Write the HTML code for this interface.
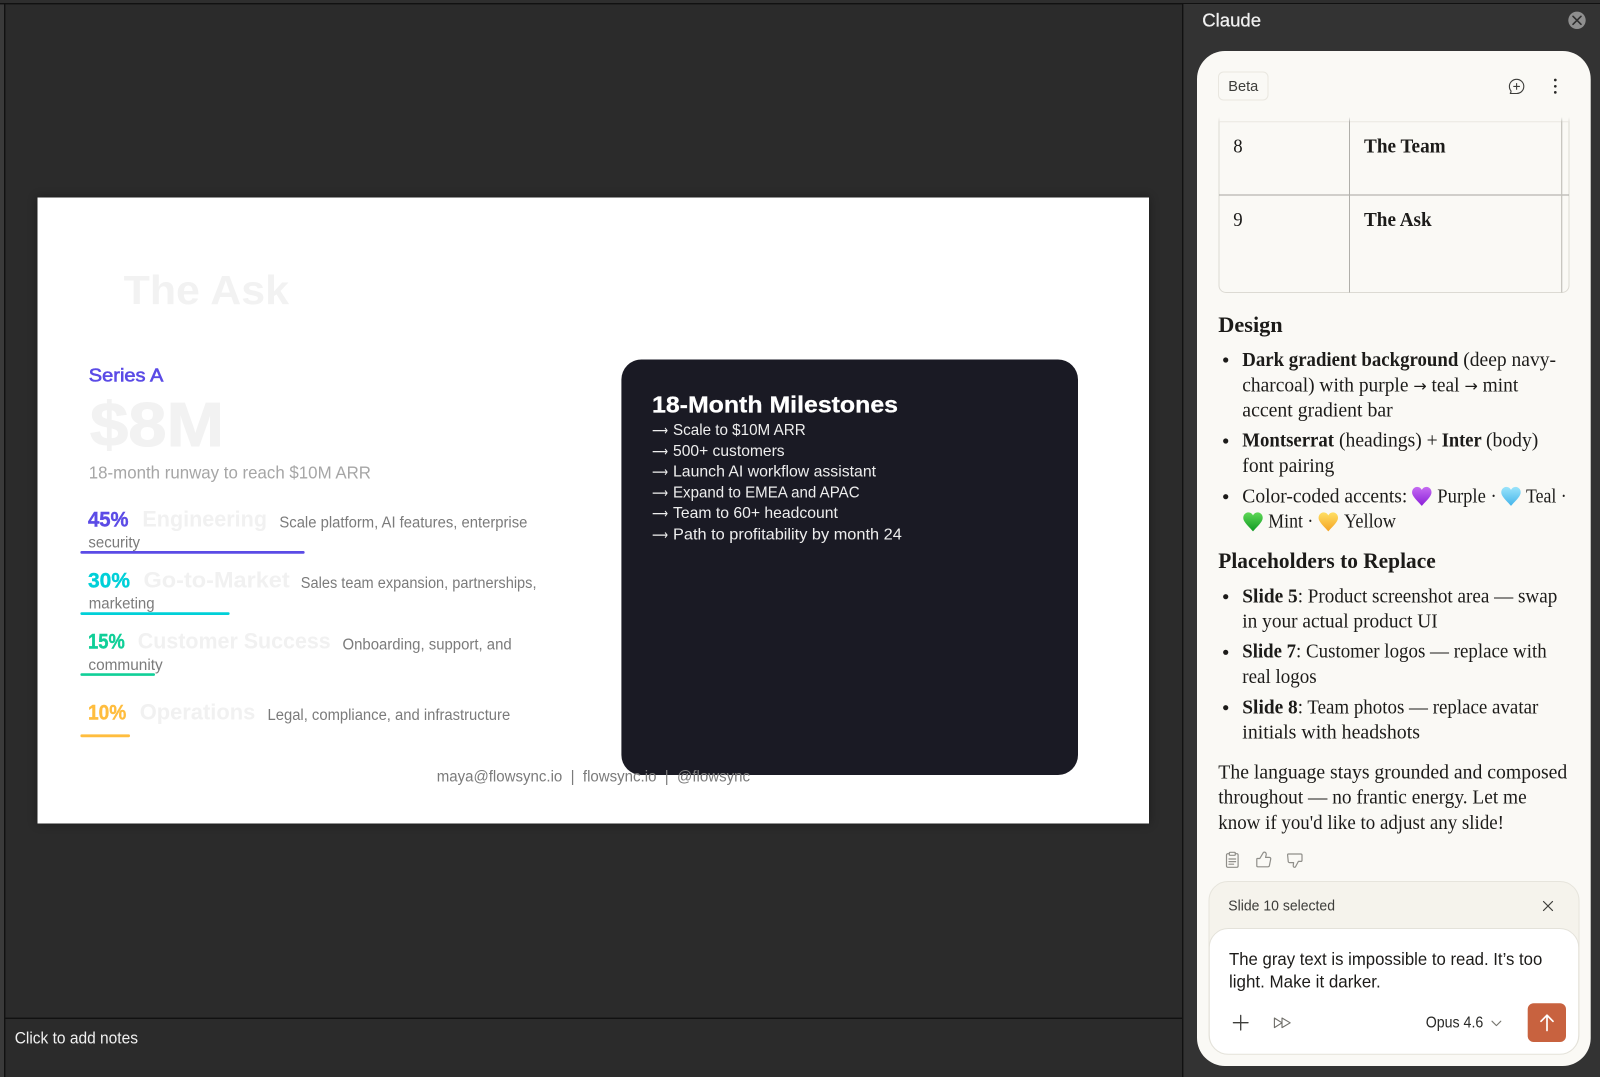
<!DOCTYPE html>
<html lang="en"><head><meta charset="utf-8"><title>Claude in Slides</title>
<style>
html,body{margin:0;padding:0;background:#2b2b2b;width:1600px;height:1077px;overflow:hidden}
svg{display:block;position:absolute;left:0;top:0}
text{white-space:pre}
.s{font-family:"Liberation Sans",sans-serif}
.sb{font-family:"Liberation Sans",sans-serif;font-weight:700}
.d{font-family:"Liberation Sans",sans-serif;font-size:15.5px;fill:#7b7b7b}
.g{font-family:"Liberation Sans",sans-serif;font-weight:700;fill:#f1f1f1;font-size:22px}
.pc{font-family:"Liberation Sans",sans-serif;font-weight:700;font-size:21.5px;stroke-width:.4px}
.m{font-family:"Liberation Sans",sans-serif;font-size:16px;fill:#eeeeee}
.a{font-family:"DejaVu Sans",sans-serif;font-size:14px;fill:#eeeeee}
.r{font-family:"Liberation Serif",serif;font-size:19.5px;fill:#1c1b19}
.rb{font-family:"Liberation Serif",serif;font-size:19.5px;font-weight:700;fill:#1c1b19}
.h{font-family:"Liberation Serif",serif;font-size:22.5px;font-weight:700;fill:#1c1b19}
.u{font-family:"Liberation Sans",sans-serif;fill:#1c1b19}
.ar{font-family:"DejaVu Sans",sans-serif;font-size:16px}
</style></head><body>
<svg width="1600" height="1077" viewBox="0 0 1600 1077" xmlns="http://www.w3.org/2000/svg">
<defs>
<filter id="sh" x="-5%" y="-5%" width="110%" height="110%"><feGaussianBlur stdDeviation="5"/></filter>
<path id="heart" d="M0 -6.6C-1.4 -9.6 -4.6 -10.4 -7 -9C-9.8 -7.4 -10.6 -3.8 -8.6 -0.6C-6.8 2.4 -3 6 0 9.4C3 6 6.8 2.4 8.6 -0.6C10.6 -3.8 9.8 -7.4 7 -9C4.6 -10.4 1.4 -9.6 0 -6.6Z"/>
<linearGradient id="hp" x1="0" y1="0" x2="0" y2="1"><stop offset="0" stop-color="#c56cf2"/><stop offset="1" stop-color="#8a1fd8"/></linearGradient>
<linearGradient id="ht" x1="0" y1="0" x2="0" y2="1"><stop offset="0" stop-color="#9be4fb"/><stop offset="1" stop-color="#44b4ea"/></linearGradient>
<linearGradient id="hm" x1="0" y1="0" x2="0" y2="1"><stop offset="0" stop-color="#5fd856"/><stop offset="1" stop-color="#0e9a22"/></linearGradient>
<linearGradient id="hy" x1="0" y1="0" x2="0" y2="1"><stop offset="0" stop-color="#ffdf63"/><stop offset="1" stop-color="#f4a323"/></linearGradient>
<linearGradient id="fade" x1="0" y1="0" x2="0" y2="1"><stop offset="0" stop-color="#faf9f5"/><stop offset="1" stop-color="#faf9f5" stop-opacity="0"/></linearGradient>
</defs>

<!-- app chrome -->
<rect width="1600" height="1077" fill="#2b2b2b"/>
<rect x="0" y="0" width="4" height="1077" fill="#3a3a3a"/>
<rect x="4" y="0" width="1.4" height="1077" fill="#111"/>
<rect x="0" y="0" width="1600" height="3" fill="#2e2e2e"/>
<rect x="0" y="3" width="1600" height="1.4" fill="#111"/>
<rect x="5" y="1017.6" width="1178" height="1.4" fill="#111"/>
<rect x="1183" y="4" width="417" height="1073" fill="#333333"/>
<rect x="1182" y="4" width="1.4" height="1073" fill="#111"/>

<!-- slide -->
<rect x="37.5" y="197.5" width="1111.5" height="626" fill="#000" opacity=".35" filter="url(#sh)"/>
<rect x="37.5" y="197.5" width="1111.5" height="626" fill="#fff"/>

<text class="sb" x="123.6" y="304" font-size="41" fill="#f2f2f2" textLength="165.4" lengthAdjust="spacingAndGlyphs">The Ask</text>
<text class="sb" x="88.8" y="381.7" font-size="18" fill="#5b4be6" textLength="74.6" lengthAdjust="spacingAndGlyphs" style="font-weight:400;stroke:#5b4be6;stroke-width:.6">Series A</text>
<text class="sb" x="90" y="446" font-size="62" fill="#f2f2f2" stroke="#f2f2f2" stroke-width="1" textLength="134" lengthAdjust="spacingAndGlyphs">$8M</text>
<text class="s" x="88.8" y="478.3" font-size="17.5" fill="#a6a6a6" textLength="282.2" lengthAdjust="spacingAndGlyphs">18-month runway to reach $10M ARR</text>

<text class="pc" x="88" y="526.7" fill="#5b4be6" stroke="#5b4be6" textLength="40.6" lengthAdjust="spacingAndGlyphs">45%</text>
<text class="g" x="142.4" y="526.7" textLength="124.6" lengthAdjust="spacingAndGlyphs">Engineering</text>
<text class="d" x="279.4" y="527.3" textLength="248" lengthAdjust="spacingAndGlyphs">Scale platform, AI features, enterprise</text>
<text class="d" x="88.4" y="547.7" textLength="51.6" lengthAdjust="spacingAndGlyphs">security</text>
<rect x="80.4" y="551" width="224.2" height="2.8" rx="1.2" fill="#5b4be6"/>

<text class="pc" x="88" y="587.3" fill="#00d0d8" stroke="#00d0d8" textLength="42" lengthAdjust="spacingAndGlyphs">30%</text>
<text class="g" x="143.5" y="587.3" textLength="146.2" lengthAdjust="spacingAndGlyphs">Go-to-Market</text>
<text class="d" x="300.8" y="588" textLength="235.7" lengthAdjust="spacingAndGlyphs">Sales team expansion, partnerships,</text>
<text class="d" x="88.8" y="608.3" textLength="65.8" lengthAdjust="spacingAndGlyphs">marketing</text>
<rect x="80.4" y="612.2" width="149.2" height="2.8" rx="1.2" fill="#00d0d8"/>

<text class="pc" x="88" y="648.7" fill="#10cf98" stroke="#10cf98" textLength="36.8" lengthAdjust="spacingAndGlyphs">15%</text>
<text class="g" x="137.8" y="648.7" textLength="192.9" lengthAdjust="spacingAndGlyphs">Customer Success</text>
<text class="d" x="342.5" y="649.7" textLength="169.2" lengthAdjust="spacingAndGlyphs">Onboarding, support, and</text>
<text class="d" x="88.4" y="670" textLength="74.3" lengthAdjust="spacingAndGlyphs">community</text>
<rect x="80.4" y="673.3" width="74.6" height="2.6" rx="1.2" fill="#10cf98"/>

<text class="pc" x="88" y="719.3" fill="#ffbd3e" stroke="#ffbd3e" textLength="38.3" lengthAdjust="spacingAndGlyphs">10%</text>
<text class="g" x="139.7" y="719.3" textLength="115.6" lengthAdjust="spacingAndGlyphs">Operations</text>
<text class="d" x="267.5" y="720" textLength="242.7" lengthAdjust="spacingAndGlyphs">Legal, compliance, and infrastructure</text>
<rect x="80.4" y="734.4" width="49.6" height="2.8" rx="1.2" fill="#ffbd3e"/>

<rect x="621.4" y="359.5" width="456.6" height="415.5" rx="20" fill="#1a1a24"/>
<text class="sb" x="652" y="412.7" font-size="23.5" fill="#ffffff" stroke="#fff" stroke-width=".3" textLength="246" lengthAdjust="spacingAndGlyphs">18-Month Milestones</text>
<text class="a" x="652" y="435" textLength="16" lengthAdjust="spacingAndGlyphs">⟶</text><text class="m" x="673" y="435" textLength="132.7" lengthAdjust="spacingAndGlyphs">Scale to $10M ARR</text>
<text class="a" x="652" y="456" textLength="16" lengthAdjust="spacingAndGlyphs">⟶</text><text class="m" x="673" y="456" textLength="111.6" lengthAdjust="spacingAndGlyphs">500+ customers</text>
<text class="a" x="652" y="476.7" textLength="16" lengthAdjust="spacingAndGlyphs">⟶</text><text class="m" x="673" y="476.7" textLength="203" lengthAdjust="spacingAndGlyphs">Launch AI workflow assistant</text>
<text class="a" x="652" y="497.3" textLength="16" lengthAdjust="spacingAndGlyphs">⟶</text><text class="m" x="673" y="497.3" textLength="186.6" lengthAdjust="spacingAndGlyphs">Expand to EMEA and APAC</text>
<text class="a" x="652" y="518" textLength="16" lengthAdjust="spacingAndGlyphs">⟶</text><text class="m" x="673" y="518" textLength="164.9" lengthAdjust="spacingAndGlyphs">Team to 60+ headcount</text>
<text class="a" x="652" y="539.3" textLength="16" lengthAdjust="spacingAndGlyphs">⟶</text><text class="m" x="673" y="539.3" textLength="228.8" lengthAdjust="spacingAndGlyphs">Path to profitability by month 24</text>

<text class="d" x="436.7" y="781.7" textLength="313.3" lengthAdjust="spacingAndGlyphs">maya@flowsync.io  |  flowsync.io  |  @flowsync</text>

<text class="s" x="14.7" y="1043.3" font-size="16.5" fill="#f0f0f0" textLength="123.3" lengthAdjust="spacingAndGlyphs">Click to add notes</text>

<!-- claude header -->
<text class="s" x="1202.3" y="26.7" font-size="18" fill="#f0f0f0" stroke="#f0f0f0" stroke-width=".25" textLength="58.7" lengthAdjust="spacingAndGlyphs">Claude</text>
<circle cx="1577" cy="20.3" r="8.7" fill="#8f8f8f"/>
<path d="M1573 16.3L1581 24.3M1581 16.3L1573 24.3" stroke="#2e2e2e" stroke-width="1.6" stroke-linecap="round"/>

<!-- claude panel -->
<rect x="1197" y="51" width="393.7" height="1015" rx="28" fill="#faf9f5"/>
<rect x="1218.5" y="72" width="49.5" height="28" rx="5" fill="#faf9f5" stroke="#e9e7e0"/>
<text class="s" x="1228.3" y="91" font-size="14.5" fill="#3d3d3a" textLength="30" lengthAdjust="spacingAndGlyphs">Beta</text>
<path d="M1510.3 93.2C1511 92.6 1511.1 91.6 1510.9 90.8C1509.9 89.7 1509.4 88.1 1509.4 86.4C1509.4 82.5 1512.6 79.3 1516.6 79.3C1520.6 79.3 1523.8 82.5 1523.8 86.4C1523.8 90.4 1520.6 93.5 1516.6 93.5L1510.3 93.5Z" fill="none" stroke="#3d3d3a" stroke-width="1.1" stroke-linejoin="round"/>
<path d="M1516.6 83.1V89.7M1513.3 86.4H1519.9" stroke="#3d3d3a" stroke-width="1.1"/>
<circle cx="1555.3" cy="80" r="1.35" fill="#2a2a28"/><circle cx="1555.3" cy="86.3" r="1.35" fill="#2a2a28"/><circle cx="1555.3" cy="92.4" r="1.35" fill="#2a2a28"/>

<!-- table -->
<path d="M1219 113V285.5a7 7 0 0 0 7 7H1562a7 7 0 0 0 7-7V113" fill="none" stroke="#dcdad3"/>
<path d="M1219 121.7H1569" stroke="#e8e6df"/>
<path d="M1219 195H1569" stroke="#a5a49f"/>
<path d="M1349.5 113V292.5" stroke="#b0afaa"/>
<path d="M1561.7 113V292.5" stroke="#c2c1bb" stroke-width="1.2"/>
<rect x="1215" y="108" width="358" height="9" fill="#faf9f5"/>
<rect x="1215" y="117" width="358" height="5" fill="url(#fade)"/>
<text class="r" x="1233.3" y="152.7" textLength="9.4" lengthAdjust="spacingAndGlyphs">8</text>
<text class="rb" x="1364" y="152.7" textLength="81.7" lengthAdjust="spacingAndGlyphs">The Team</text>
<text class="r" x="1233.3" y="226" textLength="9.4" lengthAdjust="spacingAndGlyphs">9</text>
<text class="rb" x="1364" y="226" textLength="67.7" lengthAdjust="spacingAndGlyphs">The Ask</text>

<!-- body -->
<text class="h" x="1218.3" y="332" textLength="64.4" lengthAdjust="spacingAndGlyphs">Design</text>
<circle cx="1225.7" cy="360" r="2.6" fill="#1c1b19"/>
<text class="rb" x="1242.3" y="366" textLength="216" lengthAdjust="spacingAndGlyphs">Dark gradient background</text>
<text class="r" x="1463.3" y="366" textLength="92.7" lengthAdjust="spacingAndGlyphs">(deep navy-</text>
<text class="r" x="1242.3" y="391.3" textLength="276" lengthAdjust="spacingAndGlyphs">charcoal) with purple <tspan class="ar">→</tspan> teal <tspan class="ar">→</tspan> mint</text>
<text class="r" x="1242.3" y="416.7" textLength="150.4" lengthAdjust="spacingAndGlyphs">accent gradient bar</text>
<circle cx="1225.7" cy="441" r="2.6" fill="#1c1b19"/>
<text class="rb" x="1242.3" y="446.7" textLength="91.7" lengthAdjust="spacingAndGlyphs">Montserrat</text>
<text class="r" x="1339" y="446.7" textLength="98.7" lengthAdjust="spacingAndGlyphs">(headings) +</text>
<text class="rb" x="1441.7" y="446.7" textLength="40" lengthAdjust="spacingAndGlyphs">Inter</text>
<text class="r" x="1486" y="446.7" textLength="52.3" lengthAdjust="spacingAndGlyphs">(body)</text>
<text class="r" x="1242.3" y="472" textLength="92" lengthAdjust="spacingAndGlyphs">font pairing</text>
<circle cx="1225.7" cy="496.7" r="2.6" fill="#1c1b19"/>
<text class="r" x="1242.3" y="502.3" textLength="165" lengthAdjust="spacingAndGlyphs">Color-coded accents:</text>
<use href="#heart" x="1421.8" y="496.5" fill="url(#hp)"/>
<text class="r" x="1437.3" y="502.3" textLength="59.4" lengthAdjust="spacingAndGlyphs">Purple ·</text>
<use href="#heart" x="1511" y="496.5" fill="url(#ht)"/>
<text class="r" x="1526" y="502.3" textLength="40.7" lengthAdjust="spacingAndGlyphs">Teal ·</text>
<use href="#heart" x="1253" y="522" fill="url(#hm)"/>
<text class="r" x="1268.3" y="527.7" textLength="45" lengthAdjust="spacingAndGlyphs">Mint ·</text>
<use href="#heart" x="1328.3" y="522" fill="url(#hy)"/>
<text class="r" x="1344" y="527.7" textLength="52" lengthAdjust="spacingAndGlyphs">Yellow</text>

<text class="h" x="1218.3" y="568" font-size="21.5" textLength="217.4" lengthAdjust="spacingAndGlyphs">Placeholders to Replace</text>
<circle cx="1225.7" cy="596.7" r="2.6" fill="#1c1b19"/>
<text class="rb" x="1242.3" y="602.3" textLength="55.4" lengthAdjust="spacingAndGlyphs">Slide 5</text>
<text class="r" x="1297.7" y="602.3" textLength="259.6" lengthAdjust="spacingAndGlyphs">: Product screenshot area — swap</text>
<text class="r" x="1242.3" y="627.7" textLength="195.4" lengthAdjust="spacingAndGlyphs">in your actual product UI</text>
<circle cx="1225.7" cy="652.3" r="2.6" fill="#1c1b19"/>
<text class="rb" x="1242.3" y="657.7" textLength="53.7" lengthAdjust="spacingAndGlyphs">Slide 7</text>
<text class="r" x="1296" y="657.7" textLength="250.7" lengthAdjust="spacingAndGlyphs">: Customer logos — replace with</text>
<text class="r" x="1242.3" y="683" textLength="74.4" lengthAdjust="spacingAndGlyphs">real logos</text>
<circle cx="1225.7" cy="707.7" r="2.6" fill="#1c1b19"/>
<text class="rb" x="1242.3" y="713.3" textLength="55.4" lengthAdjust="spacingAndGlyphs">Slide 8</text>
<text class="r" x="1297.7" y="713.3" textLength="240.6" lengthAdjust="spacingAndGlyphs">: Team photos — replace avatar</text>
<text class="r" x="1242.3" y="738.7" textLength="177.7" lengthAdjust="spacingAndGlyphs">initials with headshots</text>
<text class="r" x="1218.3" y="778.3" textLength="349" lengthAdjust="spacingAndGlyphs">The language stays grounded and composed</text>
<text class="r" x="1218.3" y="803.7" textLength="308.4" lengthAdjust="spacingAndGlyphs">throughout — no frantic energy. Let me</text>
<text class="r" x="1218.3" y="829" textLength="285.7" lengthAdjust="spacingAndGlyphs">know if you'd like to adjust any slide!</text>

<!-- action icons -->
<g fill="none" stroke="#8f8e89" stroke-width="1.2" stroke-linecap="round" stroke-linejoin="round">
<path d="M1229.3 853.7H1227.8a1.3 1.3 0 0 0-1.3 1.3V866a1.3 1.3 0 0 0 1.3 1.3H1236.8a1.3 1.3 0 0 0 1.3-1.3V855a1.3 1.3 0 0 0-1.3-1.3H1235.3"/>
<rect x="1229.3" y="852.3" width="6" height="3" rx=".8"/>
<path d="M1229 859H1235.6M1229 861.6H1235.6M1229 864.2H1233.6"/>
<path d="M1257 858.5H1259.8L1263.4 852.4C1265 851.6 1266.4 852.8 1266.2 854.6L1265.6 857.4H1269.4C1270.3 857.4 1270.9 858.2 1270.7 859.1L1269.4 865.6C1269.2 866.4 1268.6 866.8 1267.9 866.8H1257.8C1257.2 866.8 1256.8 866.4 1256.8 865.8V859.2C1256.8 858.8 1256.8 858.5 1257 858.5Z"/>
<path d="M1288.4 854H1300.8C1301.5 854 1302 854.5 1302 855.2V860.2C1302 860.9 1301.5 861.4 1300.8 861.4H1298.4L1295.4 867C1294.6 867.6 1293.2 867.2 1293.2 865.8L1293.6 862.6H1289.6C1288.7 862.6 1288 861.8 1288.2 861L1287.6 855C1287.6 854.4 1287.9 854 1288.4 854Z"/>
</g>

<!-- composer -->
<rect x="1209" y="881.5" width="370" height="172.5" rx="19" fill="#f5f3ec" stroke="#e6e4dc"/>
<text class="s" x="1228.3" y="910.7" font-size="15" fill="#3d3d3a" textLength="106.7" lengthAdjust="spacingAndGlyphs">Slide 10 selected</text>
<path d="M1543.5 901.5L1552.5 910.5M1552.5 901.5L1543.5 910.5" stroke="#3d3d3a" stroke-width="1.2" stroke-linecap="round"/>
<rect x="1209.3" y="928.5" width="369.4" height="125.8" rx="19" fill="#ffffff" stroke="#e4e2da"/>
<text class="u" x="1229" y="965" font-size="17.5" textLength="313.3" lengthAdjust="spacingAndGlyphs">The gray text is impossible to read. It’s too</text>
<text class="u" x="1229" y="987.7" font-size="17.5" textLength="151.7" lengthAdjust="spacingAndGlyphs">light. Make it darker.</text>
<path d="M1240.7 1015.4V1030M1233.4 1022.7H1248" stroke="#3d3d3a" stroke-width="1.3" stroke-linecap="round"/>
<path d="M1274.4 1018L1282 1022.8L1274.4 1027.6ZM1282 1018L1290.2 1022.8L1282 1027.6Z" fill="none" stroke="#6e6d68" stroke-width="1.1" stroke-linejoin="round"/>
<text class="s" x="1425.7" y="1027.7" font-size="15.5" fill="#2a2a28" textLength="57.6" lengthAdjust="spacingAndGlyphs">Opus 4.6</text>
<path d="M1492 1021.2L1496.4 1025.6L1500.8 1021.2" fill="none" stroke="#77766f" stroke-width="1.1" stroke-linecap="round" stroke-linejoin="round"/>
<rect x="1527.7" y="1003.3" width="38.3" height="38.7" rx="6" fill="#c8623f"/>
<path d="M1547 1030.5V1015.5M1541 1021.3L1547 1015.2L1553 1021.3" fill="none" stroke="#fff" stroke-width="1.7" stroke-linecap="round" stroke-linejoin="round"/>
</svg>
</body></html>
